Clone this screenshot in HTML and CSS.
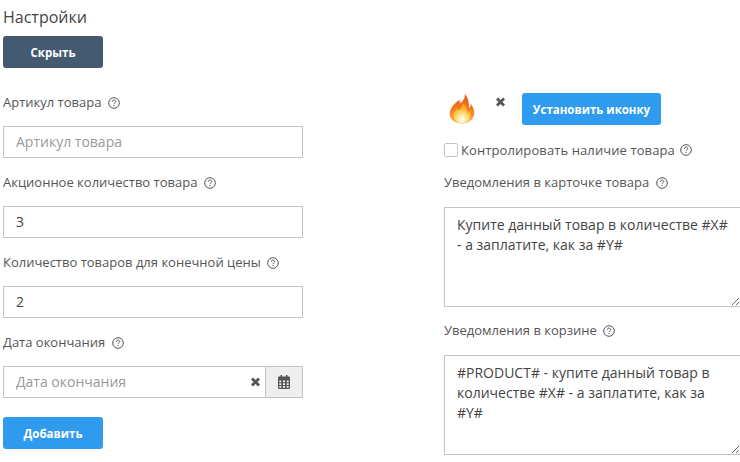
FILE: index.html
```html
<!DOCTYPE html>
<html lang="en">
<head>
  <meta charset="UTF-8">
  <title>Настройки</title>
  <link rel="stylesheet" href="styles.css">
</head>
<body>
  <svg class="sprite" width="0" height="0">
    <symbol id="help" viewBox="0 0 12 12">
      <circle cx="6" cy="6" r="5.300" fill="none" stroke="#555" stroke-width="1"/>
      <path d="M4.300 4.800C4.300 3.700 5.100 3.100 6 3.100s1.700.6 1.700 1.500c0 1.200-1.700 1.200-1.700 2.500" fill="none" stroke="#555" stroke-width="1"/>
      <rect x="5.500" y="8" width="1" height="1" fill="#555"/>
    </symbol>
    <symbol id="cross" viewBox="0 0 10 10">
      <path d="M1.500 1.500l7 7M8.500 1.500l-7 7" fill="none" stroke="#555" stroke-width="2.800"/>
    </symbol>
  </svg>

  <h1 class="title">Настройки</h1>
  <button class="btn btn-dark" type="button">Скрыть</button>

  <div class="columns">
    <div class="col-left">
      <div class="form-group">
        <label class="field-label" for="sku">Артикул товара <svg class="help"><use href="#help"/></svg></label>
        <input class="input" id="sku" type="text" placeholder="Артикул товара">
      </div>
      <div class="form-group">
        <label class="field-label" for="promoQty">Акционное количество товара <svg class="help"><use href="#help"/></svg></label>
        <input class="input" id="promoQty" type="text" value="3">
      </div>
      <div class="form-group">
        <label class="field-label" for="finalQty">Количество товаров для конечной цены <svg class="help"><use href="#help"/></svg></label>
        <input class="input" id="finalQty" type="text" value="2">
      </div>
      <div class="form-group">
        <label class="field-label" for="endDate">Дата окончания <svg class="help"><use href="#help"/></svg></label>
        <div class="date-field">
          <input class="input date-input" id="endDate" type="text" placeholder="Дата окончания">
          <svg class="date-clear"><use href="#cross"/></svg>
          <span class="date-addon">
            <svg width="12" height="14" viewBox="0 0 12 14">
              <path d="M2.500 0h1.600v2H2.500zM7.900 0h1.600v2H7.900z" fill="#555"/>
              <path d="M1 1.500h10a1 1 0 0 1 1 1V13a1 1 0 0 1-1 1H1a1 1 0 0 1-1-1V2.500a1 1 0 0 1 1-1z" fill="#555"/>
              <path d="M1.300 5.500h2v1.700h-2zM5 5.500h2v1.700H5zM8.700 5.500h2v1.700h-2zM1.300 8.300h2V10h-2zM5 8.300h2V10H5zM8.700 8.300h2V10h-2zM1.300 11h2v1.700h-2zM5 11h2v1.700H5zM8.700 11h2v1.700h-2z" fill="#eee"/>
            </svg>
          </span>
        </div>
      </div>
      <button class="btn btn-blue" type="button">Добавить</button>
    </div>

    <div class="col-right">
      <div class="icon-row">
        <svg class="flame" width="28" height="31" viewBox="0 0 32 32" preserveAspectRatio="none">
          <defs>
            <linearGradient id="flameOuter" x1="0" y1="0" x2="0" y2="1">
              <stop offset="0" stop-color="#e8541c"/>
              <stop offset="0.5" stop-color="#f47a1f"/>
              <stop offset="1" stop-color="#fbb03b"/>
            </linearGradient>
            <radialGradient id="flameInner" cx="0.5" cy="0.85" r="0.8">
              <stop offset="0" stop-color="#ffffff"/>
              <stop offset="0.3" stop-color="#ffeb99"/>
              <stop offset="0.7" stop-color="#fdb52e"/>
              <stop offset="1" stop-color="#f6901f"/>
            </radialGradient>
          </defs>
          <path d="M19 0.500C20 5 17.500 7.500 14.500 10.500C13.500 9.500 13 8.500 13 7C7.500 11 1 16 2 22.500C2.800 28 8.500 31.500 15.500 31.500C23.500 31.500 30 27.500 30 20.500C30 16.500 28 13.500 26 11C26 13 25.500 14.500 24 15.500C24.500 10 23 4.500 19 0.500z" fill="url(#flameOuter)"/>
          <path d="M16.500 9.500C17 14 14 16 12 18C11.500 17 11.300 16.500 11.300 15.500C8 18.500 5.500 21 6 24.500C6.500 28.500 11 31 15.800 31C21 31 26 28.500 26 23.500C26 21 25 19.500 23.500 18C23.500 19.500 23 20.500 22 21C22 16.500 20 12.500 16.500 9.500z" fill="url(#flameInner)"/>
        </svg>
        <svg class="icon-clear"><use href="#cross"/></svg>
        <button class="btn btn-blue btn-icon" type="button">Установить иконку</button>
      </div>
      <label class="check-row">
        <input class="check" type="checkbox">
        <span class="check-text">Контролировать наличие товара</span>
        <svg class="help"><use href="#help"/></svg>
      </label>
      <div class="form-group-right">
        <label class="field-label" for="cardNotice">Уведомления в карточке товара <svg class="help"><use href="#help"/></svg></label>
        <textarea class="textarea" id="cardNotice">Купите данный товар в количестве #X# - а заплатите, как за #Y#</textarea>
      </div>
      <div class="form-group-right">
        <label class="field-label" for="cartNotice">Уведомления в корзине <svg class="help"><use href="#help"/></svg></label>
        <textarea class="textarea" id="cartNotice">#PRODUCT# - купите данный товар в количестве #X# - а заплатите, как за #Y#</textarea>
      </div>
    </div>
  </div>
</body>
</html>
```

FILE: styles.css
```css
* {
  box-sizing: border-box;
}

html,
body {
  height: 462px;
  overflow: hidden;
}

body {
  margin: 0;
  padding: 7px 0 0 3px;
  font-family: "Open Sans", sans-serif;
  font-size: 13px;
  color: #555;
  background-color: white;
}

.sprite {
  position: absolute;
}

.title {
  margin: 0 0 9px;
  font-size: 16px;
  font-weight: 400;
  line-height: 20px;
  color: #444;
}

.btn {
  display: block;
  width: 100px;
  height: 32px;
  padding: 0;
  border: none;
  border-radius: 3px;
  font-family: inherit;
  font-size: 11.5px;
  font-weight: 700;
  color: white;
}

.btn-dark {
  background-color: #435a70;
}

.btn-blue {
  background-color: #2f9bef;
}

.btn-icon {
  width: 139px;
  margin-left: 16px;
}

.columns {
  display: grid;
  grid-template-columns: 300px 297px;
  column-gap: 141px;
  margin-top: 25px;
}

.form-group {
  margin-bottom: 15px;
}

.form-group:last-of-type {
  margin-bottom: 19px;
}

.form-group-right {
  margin-bottom: 14px;
}

.form-group-right .field-label {
  margin-bottom: 14px;
}

.field-label {
  display: block;
  height: 20px;
  margin-bottom: 13px;
  line-height: 18px;
  font-size: 13px;
  color: #555;
  white-space: nowrap;
}

.help {
  width: 12px;
  height: 12px;
  margin-left: 3px;
  vertical-align: -2px;
}

.input {
  display: block;
  width: 100%;
  height: 32px;
  padding: 0 12px 2px;
  border: 1px solid #c4c4c4;
  border-radius: 0;
  font-family: inherit;
  font-size: 14px;
  color: #444;
  outline: none;
}

.input::placeholder {
  color: #999;
  opacity: 1;
}

.date-field {
  position: relative;
  display: flex;
}

.date-input {
  flex: 1;
  border-right: none;
}

.date-clear {
  position: absolute;
  top: 11px;
  left: 247px;
  width: 11px;
  height: 10px;
}

.date-addon {
  display: flex;
  align-items: center;
  justify-content: center;
  width: 38px;
  height: 32px;
  border: 1px solid #c4c4c4;
  background-color: #eee;
}

.icon-row {
  display: flex;
  align-items: flex-start;
  height: 32px;
  margin-bottom: 17px;
}

.flame {
  margin: 0 0 0 4px;
}

.icon-clear {
  width: 11px;
  height: 10px;
  margin: 4px 0 0 19px;
}

.check-row {
  display: flex;
  align-items: center;
  height: 16px;
  margin-bottom: 15px;
  font-size: 13px;
  white-space: nowrap;
}

.check {
  width: 14px;
  height: 14px;
  margin: 0 3px 0 0;
  appearance: none;
  border: 1px solid #c4c4c4;
  border-radius: 2px;
  background-color: white;
}

.check-row .help {
  margin-left: 5px;
}

.check-text {
  letter-spacing: 0.1px;
}

.textarea {
  display: block;
  width: 297px;
  height: 100px;
  padding: 7px 12px;
  border: 1px solid #c4c4c4;
  border-radius: 0;
  font-family: inherit;
  font-size: 14px;
  line-height: 20px;
  color: #444;
  outline: none;
}
```
